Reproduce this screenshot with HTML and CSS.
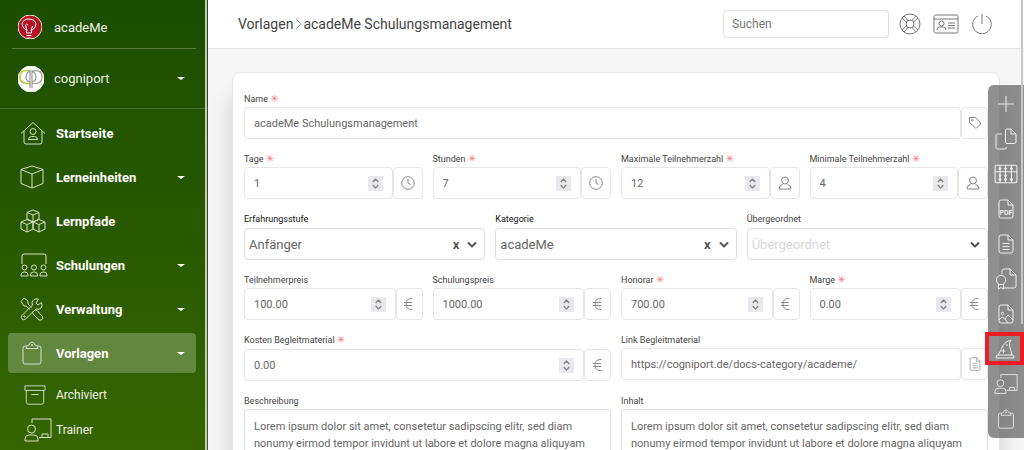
FILE: index.html
```html
<!DOCTYPE html>
<html lang="de">
<head>
<meta charset="utf-8">
<meta name="viewport" content="width=device-width, initial-scale=1">
<title>acadeMe Schulungsmanagement</title>
<link rel="stylesheet" href="styles.css">
</head>
<body>
<svg class="sprite" aria-hidden="true">
  <symbol id="house" viewBox="0 0 26 24"><path d="M1 12.500 13 1.500l12 11M4 10v11q0 2 2 2h14q2 0 2-2V10"/><circle cx="13" cy="10.500" r="3"/><path d="M8.500 18.500q0-3 3-3h3q3 0 3 3z"/></symbol>
  <symbol id="cube" viewBox="0 0 24 24"><path d="M12 1 23 4.500v14L12 23 1 18.500v-14zM1 4.500 12 9l11-4.500M12 9v14"/></symbol>
  <symbol id="cubes" viewBox="0 0 26 24"><path d="M13 1l6 2.500v6.500l-6 3-6-3V3.500zM7 3.500 13 6l6-2.500M13 6v7M7 10.500l6 2.500v7l-6 3-6-3v-7zM1 13l6 2.500 6-2.500M7 15.500V23M19 10.500l6 2.500v7l-6 3-6-3v-7zM13 13l6 2.500 6-2.500M19 15.500V23"/></symbol>
  <symbol id="class" viewBox="0 0 28 24"><path d="M2 11V3q0-2 2-2h20q2 0 2 2v8"/><circle cx="4.500" cy="14.500" r="2.500"/><circle cx="14" cy="14.500" r="2.500"/><circle cx="23.500" cy="14.500" r="2.500"/><path d="M1 23v-1q0-3 3-3h1q3 0 3 3v1zM10.500 23v-1q0-3 3-3h1q3 0 3 3v1zM20 23v-1q0-3 3-3h1q3 0 3 3v1z"/></symbol>
  <symbol id="tools" viewBox="0 0 24 24"><path d="M1 4.500 4 1l4 3v3l3.500 3.500M9.500 12.500 6 9H4L1 4.500M14 14l1-1 2 .5 5.500 6q1 2-.5 3t-3 .5L13 17l-.5-2z"/><path d="M21.500 5.500 18 8l-2-2 2.500-4q-4-1-6 2-1 2 0 4L2 18.500q-1.500 2 0 3.500t3.500 0L16 12q3 1 5-1 2-2 .5-5.500z"/><circle cx="4.500" cy="19.500" r=".7"/></symbol>
  <symbol id="clip" viewBox="0 0 20 24"><path d="M5 5H3Q1 5 1 7v14q0 2 2 2h14q2 0 2-2V7q0-2-2-2h-2M4 7.500q0-3 3-3.500 1-3 3-3t3 3q3 .5 3 3.500z"/><circle cx="10" cy="4" r=".7"/></symbol>
  <symbol id="archive" viewBox="0 0 24 22"><path d="M1 1h22v5H1zM2.500 6v13q0 2 2 2h15q2 0 2-2V6M8 10.500h8"/></symbol>
  <symbol id="trainer" viewBox="0 0 28 24"><path d="M8 5V1h19v18.500H15M18 19v-3h6v3"/><circle cx="7.500" cy="11" r="4"/><path d="M1 23v-2q0-4 4-4h5q4 0 4 4v2z"/></symbol>
  <symbol id="ring" viewBox="0 0 22 22"><circle cx="11" cy="11" r="10"/><circle cx="11" cy="11" r="4"/><path d="M3 5l4.500 4M5 3l4 4.500M17 3l-4 4.500M19 5l-4.500 4M3 17l4.500-4M5 19l4-4.500M17 19l-4-4.500M19 17l-4.500-4"/></symbol>
  <symbol id="idcard" viewBox="0 0 26 20"><rect x="1" y="1" width="24" height="18" rx="1.500"/><path d="M1 5h24M15 9h7M15 11.500h7M15 14h7M4 16q0-3 2.500-3h4q2.500 0 2.500 3"/><circle cx="8.500" cy="9.500" r="2.500"/></symbol>
  <symbol id="power" viewBox="0 0 22 22"><path d="M11 1v10M7 3a9.300 9.300 0 1 0 8 0"/></symbol>
  <symbol id="tag" viewBox="0 0 14 14"><path d="M1.500 1.500h6L12.500 7v1L8.500 12h-1l-6-5.500z"/><circle cx="4.200" cy="4.200" r=".8"/></symbol>
  <symbol id="clock" viewBox="0 0 14 14"><circle cx="7" cy="7" r="6.300"/><path d="M7 3v4l2.500 1.500"/></symbol>
  <symbol id="person" viewBox="0 0 14 14"><circle cx="7" cy="4.500" r="3.500"/><path d="M4.500 8.500Q1 9 1 13h12q0-4-3.500-4.500"/></symbol>
  <symbol id="euro" viewBox="0 0 12 14"><path d="M9.500 1.500Q3 1 3 7t6.500 5.500M1 5.500h8M1 8.500h8"/></symbol>
  <symbol id="doc" viewBox="0 0 16 20"><path d="M3 1h7l5 5v11q0 2-2 2H3q-2 0-2-2V3q0-2 2-2zM10 1v5h5M4.500 9.500h7M4.500 12.500h7M4.500 15.500h7"/></symbol>
  <symbol id="pdf" viewBox="0 0 16 20"><path d="M3 1h7l5 5v11q0 2-2 2H3q-2 0-2-2V3q0-2 2-2zM10 1v5h5"/><text x="8" y="15.500">PDF</text></symbol>
  <symbol id="image" viewBox="0 0 16 20"><path d="M3 1h7l5 5v11q0 2-2 2H3q-2 0-2-2V3q0-2 2-2zM10 1v5h5M1 16l3-3 3 2 3-4 5 5M7 15l3 4"/><circle cx="4.500" cy="9.500" r="1.200"/></symbol>
  <symbol id="plus" viewBox="0 0 18 18"><path d="M9 1v16M1 9h16"/></symbol>
  <symbol id="copy" viewBox="0 0 22 22"><path d="M12 1h4l5 5v8q0 1.500-1.500 1.500H12q-1.500 0-1.500-1.500V2.500Q10.500 1 12 1zM16 1v5h5M7 6H2.500Q1 6 1 7.500v12Q1 21 2.500 21H10q1.500 0 1.500-2"/></symbol>
  <symbol id="abacus" viewBox="0 0 22 18"><rect x="1" y="1" width="20" height="16" rx="1.500"/><path d="M1 7h20M5.500 1v16M10.500 1v16M16 1v16"/><g class="bead"><circle cx="5.500" cy="4" r="1.300"/><circle cx="10.500" cy="4" r="1.300"/><circle cx="16" cy="4" r="1.300"/><circle cx="5.500" cy="10.500" r="1.300"/><circle cx="10.500" cy="10.500" r="1.300"/><circle cx="5.500" cy="14" r="1.300"/><circle cx="10.500" cy="14" r="1.300"/><circle cx="16" cy="14" r="1.300"/></g></symbol>
  <symbol id="cert" viewBox="0 0 22 22"><path d="M7 6V3q0-2 2-2h6l6 6v11q0 2-2 2H9M15 1v6h6M3.500 16v5l2.500-1.500L8.500 21v-5"/><circle cx="6" cy="12" r="4.700"/></symbol>
  <symbol id="hat" viewBox="0 0 20 20"><path d="M3 16Q7 10 8 6.500 10 2.500 16 1q-2 3-1.500 5.500T17 16M1 19q-.5-3 2-3h14q2.500 0 2 3zM8.500 10v4M6.500 12h4M12 5v2"/></symbol>
  <symbol id="chev" viewBox="0 0 10 7"><path d="M1 1.500l4 4 4-4"/></symbol>
  <symbol id="sep" viewBox="0 0 9 12"><path d="M2 1l5 5-5 5"/></symbol>
</svg>
<div class="app">
  <aside class="sidebar">
    <a class="brand" href="#">
      <svg class="logo" viewBox="0 0 24 24"><circle cx="12" cy="12" r="12" fill="#b51226"/><path d="M8.500 18v-2.500Q4 12.500 4 9q1-5 7-5 6.500.5 7 5 0 4-4.500 6.500V18zM8.500 20.500h5M9.500 23h3M9 16l-1.500-6q1-2 2.500 0M13 16l1.500-5" fill="none" stroke="#fff"/></svg>
      <span>acadeMe</span>
    </a>
    <button class="account" type="button">
      <svg class="avatar" viewBox="0 0 26 26"><circle cx="13" cy="13" r="13" fill="#fff"/><path d="M12 5Q2 3 2 11q0 6 6 6.500h4" fill="none" stroke="#bccf2c" stroke-width="1.500"/><path d="M12 4v18M14 4v18M12 16q-4-1-4-5t4-6M14 5q10-2 10 6 0 6-6 6.500h-4M14 5q4 2 4 6t-4 5" fill="none" stroke="#999" stroke-width="1.200"/></svg>
      <span>cogniport</span><i class="caret"></i>
    </button>
    <nav class="nav">
      <a class="item" href="#"><svg class="i26"><use href="#house"/></svg><span>Startseite</span></a>
      <a class="item" href="#"><svg class="i24"><use href="#cube"/></svg><span>Lerneinheiten</span><i class="caret"></i></a>
      <a class="item" href="#"><svg class="i26"><use href="#cubes"/></svg><span>Lernpfade</span></a>
      <a class="item" href="#"><svg class="i28"><use href="#class"/></svg><span>Schulungen</span><i class="caret"></i></a>
      <a class="item" href="#"><svg class="i24"><use href="#tools"/></svg><span>Verwaltung</span><i class="caret"></i></a>
      <a class="item active" href="#"><svg class="i24"><use href="#clip"/></svg><span>Vorlagen</span><i class="caret"></i></a>
      <div class="sub">
        <a class="subitem" href="#"><svg class="i22"><use href="#archive"/></svg><span>Archiviert</span></a>
        <a class="subitem" href="#"><svg class="i28"><use href="#trainer"/></svg><span>Trainer</span></a>
      </div>
    </nav>
    <div class="side-thumb"></div>
  </aside>

  <div class="page">
    <header class="topbar">
      <nav class="crumbs"><a href="#">Vorlagen</a><svg><use href="#sep"/></svg><a href="#">acadeMe Schulungsmanagement</a></nav>
      <input class="search" type="search" placeholder="Suchen" aria-label="Suchen">
      <div class="actions">
        <button type="button" aria-label="Hilfe"><svg class="i22"><use href="#ring"/></svg></button>
        <button type="button" aria-label="Profil"><svg class="i26"><use href="#idcard"/></svg></button>
        <button type="button" aria-label="Abmelden"><svg class="i22"><use href="#power"/></svg></button>
      </div>
    </header>

    <main class="content">
      <form class="card">
        <div class="row">
          <div class="field"><label for="name">Name <b>✳</b></label><div class="group"><input id="name" value="acadeMe Schulungsmanagement"><span class="addon"><svg><use href="#tag"/></svg></span></div></div>
        </div>
        <div class="row four">
          <div class="field"><label for="tage">Tage <b>✳</b></label><div class="group"><div class="num"><input id="tage" type="number" value="1"><span class="spin"><svg><use href="#chev"/></svg><svg><use href="#chev"/></svg></span></div><span class="addon wide"><svg><use href="#clock"/></svg></span></div></div>
          <div class="field"><label for="stunden">Stunden <b>✳</b></label><div class="group"><div class="num"><input id="stunden" type="number" value="7"><span class="spin"><svg><use href="#chev"/></svg><svg><use href="#chev"/></svg></span></div><span class="addon wide"><svg><use href="#clock"/></svg></span></div></div>
          <div class="field"><label for="max">Maximale Teilnehmerzahl <b>✳</b></label><div class="group"><div class="num"><input id="max" type="number" value="12"><span class="spin"><svg><use href="#chev"/></svg><svg><use href="#chev"/></svg></span></div><span class="addon wide"><svg><use href="#person"/></svg></span></div></div>
          <div class="field"><label for="min">Minimale Teilnehmerzahl <b>✳</b></label><div class="group"><div class="num"><input id="min" type="number" value="4"><span class="spin"><svg><use href="#chev"/></svg><svg><use href="#chev"/></svg></span></div><span class="addon wide"><svg><use href="#person"/></svg></span></div></div>
        </div>
        <div class="row three">
          <div class="field tall"><label class="dark" for="stufe">Erfahrungsstufe</label><div class="pick"><select id="stufe"><option>Anfänger</option></select><button class="clear" type="button" aria-label="Auswahl löschen">x</button><svg><use href="#chev"/></svg></div></div>
          <div class="field tall"><label class="dark" for="kat">Kategorie</label><div class="pick"><select id="kat"><option>acadeMe</option></select><button class="clear" type="button" aria-label="Auswahl löschen">x</button><svg><use href="#chev"/></svg></div></div>
          <div class="field tall"><label for="parent">Übergeordnet</label><div class="pick"><select id="parent" class="empty"><option>Übergeordnet</option></select><svg><use href="#chev"/></svg></div></div>
        </div>
        <div class="row four">
          <div class="field"><label for="tpreis">Teilnehmerpreis</label><div class="group"><div class="num"><input id="tpreis" type="number" step="0.01" value="100.00"><span class="spin"><svg><use href="#chev"/></svg><svg><use href="#chev"/></svg></span></div><span class="addon"><svg><use href="#euro"/></svg></span></div></div>
          <div class="field"><label for="spreis">Schulungspreis</label><div class="group"><div class="num"><input id="spreis" type="number" step="0.01" value="1000.00"><span class="spin"><svg><use href="#chev"/></svg><svg><use href="#chev"/></svg></span></div><span class="addon"><svg><use href="#euro"/></svg></span></div></div>
          <div class="field"><label for="honorar">Honorar <b>✳</b></label><div class="group"><div class="num"><input id="honorar" type="number" step="0.01" value="700.00"><span class="spin"><svg><use href="#chev"/></svg><svg><use href="#chev"/></svg></span></div><span class="addon"><svg><use href="#euro"/></svg></span></div></div>
          <div class="field"><label for="marge">Marge <b>✳</b></label><div class="group"><div class="num"><input id="marge" type="number" step="0.01" value="0.00"><span class="spin"><svg><use href="#chev"/></svg><svg><use href="#chev"/></svg></span></div><span class="addon"><svg><use href="#euro"/></svg></span></div></div>
        </div>
        <div class="row two">
          <div class="field tall"><label for="kosten">Kosten Begleitmaterial <b>✳</b></label><div class="group"><div class="num"><input id="kosten" type="number" step="0.01" value="0.00"><span class="spin"><svg><use href="#chev"/></svg><svg><use href="#chev"/></svg></span></div><span class="addon"><svg><use href="#euro"/></svg></span></div></div>
          <div class="field"><label for="link">Link Begleitmaterial</label><div class="group"><input id="link" type="url" value="https://cogniport.de/docs-category/academe/"><span class="addon"><svg><use href="#doc"/></svg></span></div></div>
        </div>
        <div class="row two">
          <div class="field"><label for="besch">Beschreibung</label><textarea id="besch" rows="5">Lorem ipsum dolor sit amet, consetetur sadipscing elitr, sed diam nonumy eirmod tempor invidunt ut labore et dolore magna aliquyam</textarea></div>
          <div class="field"><label for="inhalt">Inhalt</label><textarea id="inhalt" rows="5">Lorem ipsum dolor sit amet, consetetur sadipscing elitr, sed diam nonumy eirmod tempor invidunt ut labore et dolore magna aliquyam</textarea></div>
        </div>
      </form>
    </main>
  </div>

  <div class="toolbar">
    <button type="button" aria-label="Neu"><svg class="i18"><use href="#plus"/></svg></button>
    <button type="button" aria-label="Kopieren"><svg class="i22"><use href="#copy"/></svg></button>
    <button type="button" aria-label="Kalkulation"><svg class="i24"><use href="#abacus"/></svg></button>
    <button type="button" aria-label="PDF"><svg class="i20"><use href="#pdf"/></svg></button>
    <button type="button" aria-label="Dokument"><svg class="i20"><use href="#doc"/></svg></button>
    <button type="button" aria-label="Zertifikat"><svg class="i22"><use href="#cert"/></svg></button>
    <button type="button" aria-label="Bild"><svg class="i20"><use href="#image"/></svg></button>
    <button class="marked" type="button" aria-label="Assistent"><svg class="i20"><use href="#hat"/></svg></button>
    <button type="button" aria-label="Trainer"><svg class="i24"><use href="#trainer"/></svg></button>
    <button type="button" aria-label="Vorlage"><svg class="i20"><use href="#clip"/></svg></button>
  </div>
  <div class="page-thumb"></div>
</div>
</body>
</html>
```
FILE: styles.css
```css
* { box-sizing: border-box; }
body { margin: 0; font-family: Roboto, "Liberation Sans", sans-serif; color: #444; }
button, input, select, textarea { font: inherit; color: inherit; }
button { border: 0; padding: 0; background: none; cursor: pointer; }
a { color: inherit; text-decoration: none; }
svg { fill: none; stroke: currentColor; stroke-width: 1; stroke-linejoin: round; flex: none; }
.sprite { display: none; }
symbol text { font: bold 7px Roboto, sans-serif; fill: currentColor; stroke: none; text-anchor: middle; }
.bead { fill: currentColor; stroke: none; }
.i18 { width: 18px; height: 18px; }
.i20 { width: 20px; height: 20px; }
.i22 { width: 22px; height: 22px; }
.i24 { width: 24px; height: 24px; }
.i26 { width: 26px; height: 24px; }
.i28 { width: 28px; height: 24px; }

.app { position: relative; display: flex; height: 100vh; overflow: hidden; }

.sidebar { position: relative; flex: 0 0 208px; overflow: hidden; color: #eef3ea; background: linear-gradient(#1b4d00, #366500); }
.side-thumb { position: absolute; top: 0; bottom: 0; right: 1px; width: 2px; background: #c4c9c0; }
.brand { display: flex; align-items: center; gap: 12px; height: 49px; margin: 0 12px; padding: 6px 6px 0; border-bottom: 1px solid #55793f; font-size: 13px; }
.logo { width: 24px; height: 24px; }
.account { display: flex; align-items: center; gap: 10px; width: 100%; height: 60px; padding: 0 23px 0 18px; border-bottom: 1px solid #466f2c; font-size: 13px; }
.avatar { width: 26px; height: 26px; }
.caret { margin-left: auto; border: 4px solid transparent; border-top: 3px solid #fff; border-bottom: 0; }
.nav { display: flex; flex-direction: column; gap: 4px; padding: 4px 12px 0 8px; }
.item, .subitem { display: grid; grid-template-columns: 36px 1fr auto; align-items: center; padding: 0 11px 0 12px; }
.item { height: 40px; border-radius: 4px; font-size: 13px; font-weight: 700; color: #fff; }
.item svg, .subitem svg { color: #d5e0cc; }
.active { background: #62873f; }
.sub { display: flex; flex-direction: column; }
.subitem { height: 35px; font-size: 12px; }
.subitem svg { margin-left: 4px; }

.page { flex: 1; min-width: 0; display: flex; flex-direction: column; background: #f6f6f6; }
.topbar { display: flex; align-items: center; flex: 0 0 49px; padding: 0 31px 0 30px; background: #fff; border-bottom: 1px solid #e6e6e6; }
.crumbs { display: flex; align-items: center; margin-right: auto; font-size: 14px; color: #444; }
.crumbs svg { width: 9px; height: 12px; color: #999; margin-left: 1px; }
.search { width: 166px; height: 28px; padding: 0 8px; border: 1px solid #e0e0e0; border-radius: 4px; background: #fff; font-size: 12px; margin-right: 10px; }
.search::placeholder { color: #777; opacity: 1; }
.actions { display: flex; align-items: center; gap: 12px; color: #777; }
.actions button { display: flex; }
.actions .i26 { height: 20px; }

.content { flex: 1; min-height: 0; padding: 23px 24px 0 24px; overflow: hidden; }
.card { display: flex; flex-direction: column; gap: 12px; padding: 18px 11px 24px; background: #fff; border: 1px solid #e6e6e6; border-radius: 8px; box-shadow: 0 24px 24px rgba(0, 0, 0, .16); }
.row { display: grid; gap: 10px; }
.two { grid-template-columns: repeat(2, minmax(0, 1fr)); }
.three { grid-template-columns: repeat(3, minmax(0, 1fr)); }
.four { grid-template-columns: repeat(4, minmax(0, 1fr)); }
.field label { display: block; height: 16px; font-size: 9px; line-height: 16px; white-space: nowrap; color: #444; }
.field.tall label { margin-bottom: 1px; }
.field label.dark { color: #111; }
.field label b { font: 10px/10px "DejaVu Sans", sans-serif; color: #f47c7c; }
.group { display: flex; height: 32px; }
.group input { flex: 1; width: 100%; min-width: 0; height: 32px; padding: 0 9px; border: 1px solid #e6e6e6; border-radius: 4px; background: #fff; font-size: 11px; color: #666; appearance: textfield; }
.group input::-webkit-inner-spin-button { appearance: none; }
.num { position: relative; flex: 1; min-width: 0; }
.spin { position: absolute; top: 9px; right: 10px; display: flex; flex-direction: column; justify-content: space-between; align-items: center; width: 15px; height: 15px; padding: 2px 0; background: #e9e9ed; color: #888; }
.spin svg { width: 7px; height: 5px; stroke-width: 2; }
.spin svg:first-child { transform: rotate(180deg); }
.addon { display: flex; align-items: center; justify-content: center; flex: 0 0 27px; border: 1px solid #e6e6e6; border-radius: 4px; color: #888; }
.addon.wide { flex-basis: 30px; }
.addon svg { width: 14px; height: 14px; }
.pick { position: relative; display: flex; align-items: center; }
.pick select { width: 100%; height: 32px; padding: 0 40px 0 4px; border: 1px solid #e0e0e0; border-radius: 4px; background: #fff; appearance: none; font-size: 13px; color: #666; }
.pick select.empty { color: #d8d8d8; }
.pick svg { position: absolute; right: 8px; width: 10px; height: 7px; stroke-width: 2; color: #555; pointer-events: none; }
.clear { position: absolute; right: 26px; font-size: 13px; font-weight: 700; color: #555; }
textarea { display: block; width: 100%; padding: 8px 9px; border: 1px solid #e0e0e0; border-radius: 4px; font-size: 11px; line-height: 17px; color: #666; resize: none; background: #fff; }

.toolbar { position: absolute; top: 85px; right: 0; display: flex; flex-direction: column; width: 36px; padding: 1px 0 2px; border-radius: 6px 0 0 6px; background: rgba(85, 85, 85, .66); color: #eee; }
.toolbar button { display: flex; align-items: center; justify-content: center; height: 35px; }
.toolbar .marked { margin: 1px 0 1px -3px; height: 33px; border: 4px solid #ed1c24; }
.page-thumb { position: absolute; top: 0; right: 1px; width: 2px; height: 72vh; background: #c8c8c8; }
```
